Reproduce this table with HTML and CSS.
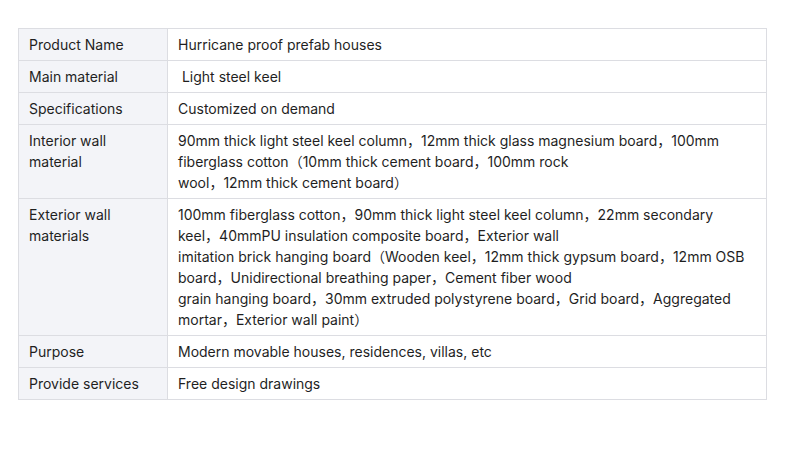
FILE: index.html
```html
<!DOCTYPE html>
<html>
<head>
<meta charset="utf-8">
<link rel="stylesheet" href="styles.css">
</head>
<body>
<div class="wrap">
<table class="spec">
<tr><td class="k">Product Name</td><td class="v">Hurricane proof prefab houses</td></tr>
<tr><td class="k">Main material</td><td class="v">&nbsp;Light steel keel</td></tr>
<tr><td class="k">Specifications</td><td class="v">Customized on demand</td></tr>
<tr><td class="k">Interior wall material</td><td class="v">90mm thick light steel keel column，12mm thick glass magnesium board，100mm fiberglass cotton（10mm thick cement board，100mm rock<br>wool，12mm thick cement board）</td></tr>
<tr><td class="k">Exterior wall materials</td><td class="v">100mm fiberglass cotton，90mm thick light steel keel column，22mm secondary keel，40mmPU insulation composite board，Exterior wall<br>imitation brick hanging board（Wooden keel，12mm thick gypsum board，12mm OSB board，Unidirectional breathing paper，Cement fiber wood<br>grain hanging board，30mm extruded polystyrene board，Grid board，Aggregated mortar，Exterior wall paint）</td></tr>
<tr><td class="k">Purpose</td><td class="v">Modern movable houses, residences, villas, etc</td></tr>
<tr><td class="k">Provide services</td><td class="v">Free design drawings</td></tr>
</table>
</div>
</body>
</html>
```
FILE: styles.css
```css
html, body { margin: 0; padding: 0; background: #fff; }
body {
  font-family: Inter, "Noto Sans CJK SC", sans-serif;
  font-size: 14px;
  color: #1f1f1f;
}
.wrap { padding: 28px 23px 0 18px; }
.spec {
  width: 749px;
  border-collapse: collapse;
  border: 1px solid #dcdde2;
}
.spec td {
  border: 1px solid #dcdde2;
  padding: 5px 10px 5px 10px;
  line-height: 21px;
  vertical-align: top;
  text-align: left;
}
.spec td.k {
  width: 128px;
  background: #f3f4f8;
}
.spec td.v { background: #fff; }
```
